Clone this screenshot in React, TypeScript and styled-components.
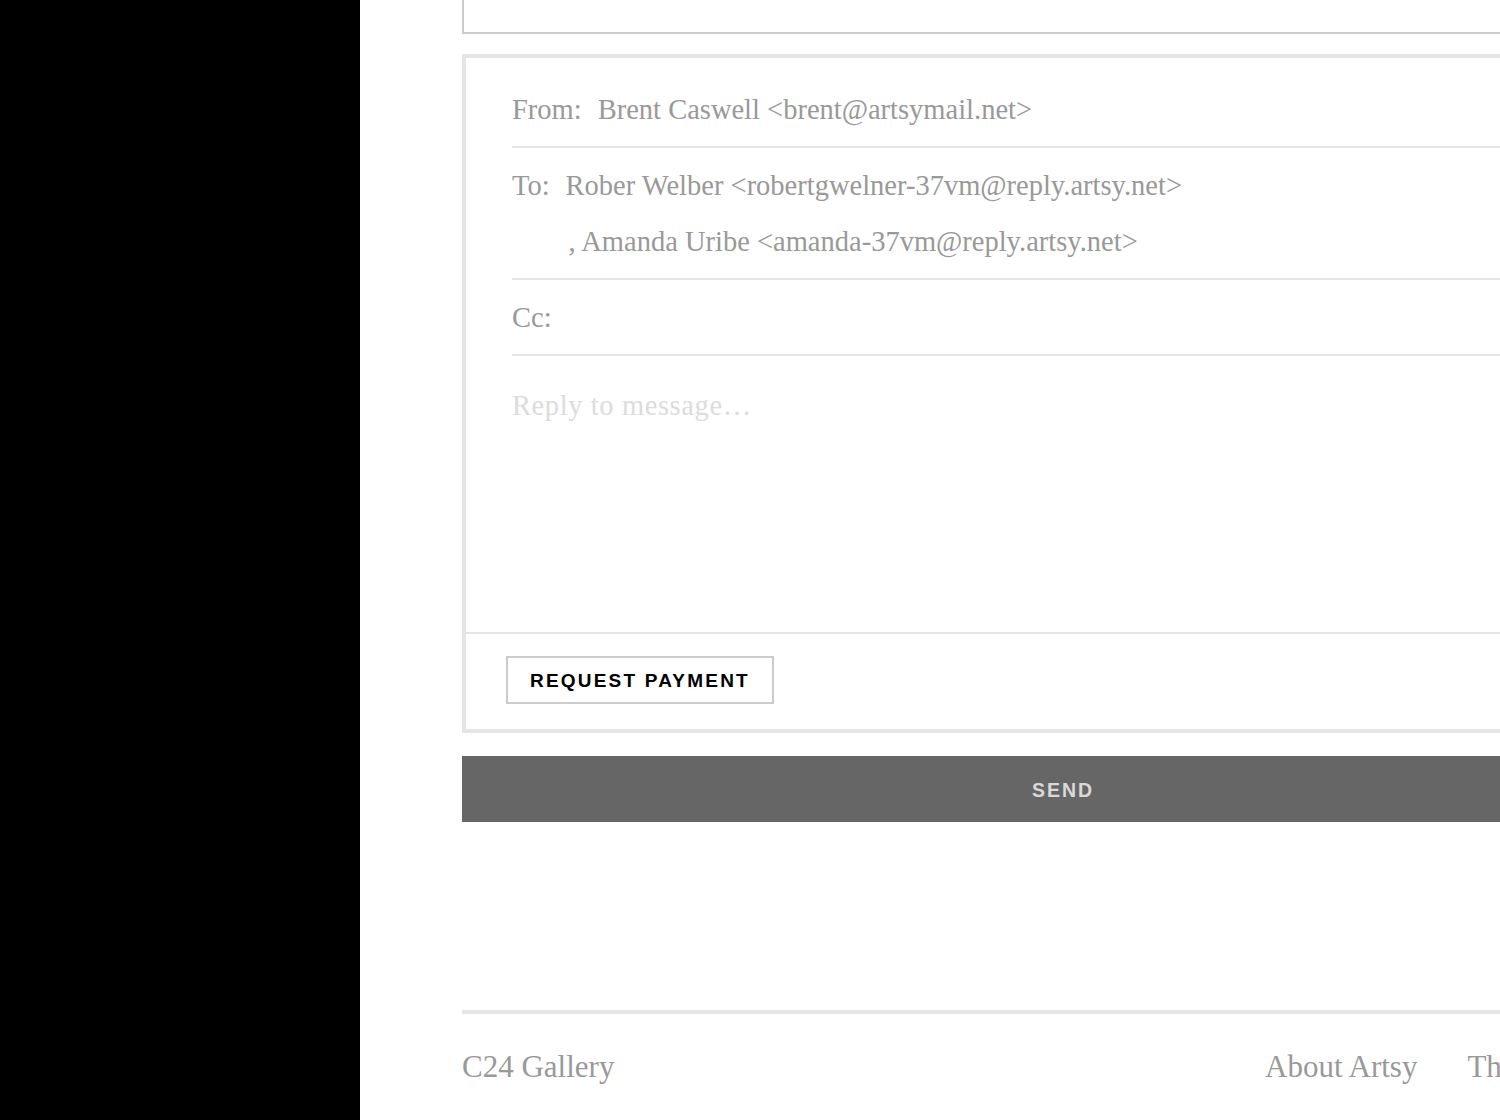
import React from "react";
import styled, { createGlobalStyle } from "styled-components";

const GlobalStyle = createGlobalStyle`
  html, body {
    margin: 0;
    padding: 0;
    width: 1500px;
    height: 1120px;
    overflow: hidden;
    background: #fff;
  }
  * { box-sizing: border-box; }
`;

const serif = `"Liberation Serif", "Times New Roman", serif`;
const sans = `"Liberation Sans", Arial, sans-serif`;

const Page = styled.div`
  display: flex;
  width: 1500px;
  height: 1120px;
  overflow: hidden;
`;

const Sidebar = styled.aside`
  flex: 0 0 360px;
  height: 100%;
  background: #000;
`;

const Main = styled.main`
  flex: 1 1 auto;
  min-width: 0;
  padding-left: 102px;
  overflow: hidden;
`;

const Content = styled.div`
  width: 1202px;
  display: flex;
  flex-direction: column;
`;

const PrevMessage = styled.div`
  height: 34px;
  border: 2px solid #cccccc;
  border-top: none;
`;

const Composer = styled.section`
  margin-top: 20px;
  border: 4px solid #e5e5e5;
  display: flex;
  flex-direction: column;
`;

const Fields = styled.div`
  padding: 14px 46px 0;
`;

const FieldRow = styled.div`
  display: flex;
  align-items: flex-start;
  padding: 20px 0 18px;
  border-bottom: 2px solid #e5e5e5;
  font-family: ${serif};
  font-size: 28.5px;
  line-height: 36px;
  color: #999999;
`;

const Label = styled.span<{ $gap: number }>`
  flex: 0 0 auto;
  margin-right: ${(p) => p.$gap}px;
`;

const Recipients = styled.div`
  display: flex;
  flex-direction: column;
  gap: 20px;
`;

const Recipient = styled.span<{ $indent?: number }>`
  white-space: nowrap;
  padding-left: ${(p) => p.$indent ?? 0}px;
`;

const MessageInput = styled.textarea`
  display: block;
  width: 100%;
  height: 276px;
  margin: 0;
  padding: 32px 46px 0;
  border: none;
  outline: none;
  resize: none;
  background: transparent;
  font-family: ${serif};
  font-size: 28.5px;
  line-height: 36px;
  letter-spacing: 0.6px;
  color: #999999;
  &::placeholder {
    color: #dcdcdc;
    opacity: 1;
  }
`;

const ComposerFooter = styled.div`
  border-top: 2px solid #e5e5e5;
  padding: 22px 40px 25px;
  display: flex;
`;

const OutlineButton = styled.button`
  height: 48px;
  padding: 1px 22px 0;
  margin: 0;
  border: 2px solid #cccccc;
  background: #fff;
  color: #000;
  font-family: ${sans};
  font-weight: 700;
  font-size: 19px;
  letter-spacing: 2.2px;
  text-transform: uppercase;
  cursor: pointer;
`;

const SendButton = styled.button`
  margin-top: 23px;
  height: 66px;
  width: 100%;
  border: none;
  background: #666666;
  color: #d9d9d9;
  font-family: ${sans};
  font-weight: 700;
  font-size: 19.5px;
  letter-spacing: 2px;
  text-transform: uppercase;
  padding: 3px 0 0;
`;

const Footer = styled.footer`
  margin-top: 188px;
  border-top: 4px solid #e5e5e5;
  padding-top: 33px;
  display: flex;
  font-family: ${serif};
  font-size: 31px;
  line-height: 40px;
  color: #999999;
`;

const Brand = styled.div`
  flex: 0 0 803px;
  white-space: nowrap;
`;

const FooterLinks = styled.nav`
  display: flex;
  gap: 50px;
  white-space: nowrap;
`;

const FooterLink = styled.a`
  color: inherit;
  text-decoration: none;
`;

export default function App() {
  return (
    <>
      <GlobalStyle />
      <Page>
        <Sidebar />
        <Main>
          <Content>
            <PrevMessage />
            <Composer>
              <Fields>
                <FieldRow>
                  <Label $gap={16}>From:</Label>
                  <span>Brent Caswell &lt;brent@artsymail.net&gt;</span>
                </FieldRow>
                <FieldRow>
                  <Label $gap={16}>To:</Label>
                  <Recipients>
                    <Recipient>Rober Welber &lt;robertgwelner-37vm@reply.artsy.net&gt;</Recipient>
                    <Recipient $indent={3}>, Amanda Uribe &lt;amanda-37vm@reply.artsy.net&gt;</Recipient>
                  </Recipients>
                </FieldRow>
                <FieldRow>
                  <Label $gap={16}>Cc:</Label>
                </FieldRow>
              </Fields>
              <MessageInput placeholder="Reply to message…" />
              <ComposerFooter>
                <OutlineButton>Request Payment</OutlineButton>
              </ComposerFooter>
            </Composer>
            <SendButton>Send</SendButton>
            <Footer>
              <Brand>C24 Gallery</Brand>
              <FooterLinks>
                <FooterLink href="#">About Artsy</FooterLink>
                <FooterLink href="#">The Art Genome Project</FooterLink>
              </FooterLinks>
            </Footer>
          </Content>
        </Main>
      </Page>
    </>
  );
}
